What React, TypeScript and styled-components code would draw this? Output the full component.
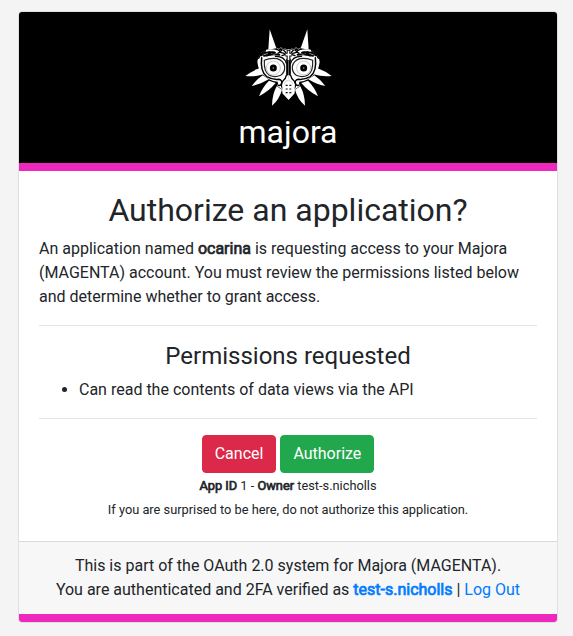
import React from "react";
import styled, { createGlobalStyle } from "styled-components";

const accent = "#ee27bd";

const GlobalStyle = createGlobalStyle`
  *, *::before, *::after { box-sizing: border-box; }
  body {
    margin: 0;
    background: #f4f4f4;
    color: #212529;
    font: 400 16px/24px Roboto, sans-serif;
  }
`;

const Page = styled.main`
  padding: 11px 15px 13px 18px;
`;

const Card = styled.section`
  width: 540px;
  border: 1px solid #dfdfdf;
  border-radius: 4px;
  background: #fff;
  overflow: hidden;
`;

const Header = styled.header`
  display: flex;
  flex-direction: column;
  align-items: center;
  height: 159px;
  padding: 12px 20px 11px;
  background: #000;
  color: #fff;
  border-bottom: 8px solid ${accent};
`;

const Logo = styled.svg`
  display: block;
  width: 100px;
  height: 89px;
  flex: none;
`;

const Title = styled.h2`
  margin: 0;
  font-size: 32px;
  font-weight: 400;
  line-height: 38.4px;
  text-align: center;
`;

const Body = styled.div`
  height: 370px;
  padding: 20px;
`;

const Intro = styled.p`
  margin: 8px 0 16px;
`;

const Divider = styled.hr`
  margin: 0 0 16px;
  border: 0;
  border-top: 1px solid rgba(0, 0, 0, 0.1);
`;

const Subtitle = styled.h4`
  margin: 0 0 7px;
  font-size: 24px;
  font-weight: 400;
  line-height: 28.8px;
  text-align: center;
`;

const Permissions = styled.ul`
  margin: 0 0 16px;
  padding-left: 40px;
`;

const Strong = styled.span`
  -webkit-text-stroke: 0.7px currentColor;
`;

const Actions = styled.div`
  display: flex;
  justify-content: center;
  gap: 4px;
  margin-bottom: 1px;
`;

const Button = styled.button<{ $color: string }>`
  height: 38px;
  padding: 6px 12px;
  border: 1px solid ${(p) => p.$color};
  border-radius: 4px;
  background: ${(p) => p.$color};
  color: #fff;
  font: inherit;
`;

const Note = styled.div`
  font-size: 12.8px;
  line-height: 24px;
  text-align: center;
`;

const Footer = styled.footer`
  height: 81px;
  padding: 12px 20px;
  border-top: 1px solid #dadada;
  border-bottom: 8px solid ${accent};
  background: #f7f7f7;
  text-align: center;
`;

const Link = styled.a`
  color: #007bff;
  text-decoration: none;
`;

function MaskHalf() {
  return (
    <g>
      <g fill="#fff">
        <path d="M95 22 L91 83 L115 79 Z" />
        <path d="M22 162 Q42 147 64 139 L76 157 Q50 165 22 162Z" />
        <path d="M41 192 Q54 174 74 160 L92 172 Q68 187 41 192Z" />
        <path d="M63 223 Q72 197 93 176 L113 183 Q93 207 63 223Z" />
        <path d="M102 251 Q102 219 116 193 L132 203 Q124 232 102 251Z" />
        <path d="M152 82 L122 86 Q96 78 78 86 Q60 99 58 120 Q61 144 73 156 Q80 165 92 171 Q105 179 119 179 Q122 185 117 192 L132 202 L137 217 L152 233Z" />
      </g>
      <g fill="none" stroke="#000" strokeLinecap="round">
        <path d="M79 115 Q96 107 117 110 Q137 116 140 134 Q141 151 128 160 Q110 168 94 160 Q77 150 79 115Z" strokeWidth="3.5" stroke="#222" />
        <path d="M71 107 Q66 148 86 164 Q104 174 122 172 Q135 175 130 186 Q128 192 121 190" strokeWidth="4.5" />
        <path d="M134 200 Q127 188 134 178 Q143 171 145 160" strokeWidth="4" />
        <path d="M112 103 Q139 102 145 124" strokeWidth="3.5" />
        <path d="M148 113 V157" strokeWidth="7" />
        <path d="M62 109 Q66 96 82 85 M70 101 L82 91 L87 101 L94 91 L102 99 L108 91" strokeWidth="4" />
        <path d="M76 95 Q93 88 111 92 M78 101 L100 98 M106 97 L124 98" strokeWidth="6" strokeDasharray="8 2" />
        <path d="M118 80 L127 89 L134 82 L143 91 M120 94 L129 87 M132 101 L143 97 M127 91 L139 94" strokeWidth="4" />
      </g>
      <circle cx="106" cy="138" r="21" fill="#fff" stroke="#999" strokeWidth="1.5" />
      <circle cx="106" cy="138" r="10.5" fill="#000" />
      <circle cx="106" cy="138" r="2.5" fill="#999" />
      <path d="M115 78 L123 82 L129 76 L134 83 L143 80" fill="none" stroke="#aaa" strokeWidth="2.5" />
      <path d="M76 98 L88 95 M99 102 L119 92" stroke="#aaa" strokeWidth="2" />
    </g>
  );
}

function MajoraLogo() {
  return (
    <Logo viewBox="0 6 300 267" aria-hidden="true">
      <MaskHalf />
      <g transform="translate(303 0) scale(-1 1)">
        <MaskHalf />
      </g>
      <path d="M151.5 84 V116 M142 98 H161" stroke="#000" strokeWidth="11" />
      <path d="M151.5 86 V115 M143 98 H160" stroke="#fff" strokeWidth="5" />
      <path
        d="M143 175 Q151.5 168 160 175 Q168 180 170 192 V214 L152 233 L133 214 V192 Q135 180 143 175Z"
        fill="#fff"
      />
      <path d="M139 186 Q141 176 151.5 175 Q162 176 164 186" fill="none" stroke="#bbb" strokeWidth="2" />
      <path
        d="M143 190 H149 M154 190 H160 M143 201 H149 M154 201 H160 M143 212 H149 M154 212 H160"
        stroke="#111"
        strokeWidth="3.5"
      />
    </Logo>
  );
}

export default function App() {
  return (
    <>
      <GlobalStyle />
      <Page>
        <Card>
          <Header>
            <MajoraLogo />
            <Title>majora</Title>
          </Header>
          <Body>
            <Title>Authorize an application?</Title>
            <Intro>
              An application named <Strong>ocarina</Strong> is requesting access to your Majora (MAGENTA) account. You
              must review the permissions listed below and determine whether to grant access.
            </Intro>
            <Divider />
            <Subtitle>Permissions requested</Subtitle>
            <Permissions>
              <li>Can read the contents of data views via the API</li>
            </Permissions>
            <Divider />
            <Actions>
              <Button $color="#dc2849">Cancel</Button>
              <Button $color="#22a84c">Authorize</Button>
            </Actions>
            <Note>
              <Strong>App ID</Strong> 1 - <Strong>Owner</Strong> test-s.nicholls
            </Note>
            <Note>If you are surprised to be here, do not authorize this application.</Note>
          </Body>
          <Footer>
            <div>This is part of the OAuth 2.0 system for Majora (MAGENTA).</div>
            <div>
              You are authenticated and 2FA verified as{" "}
              <Link>
                <Strong>test-s.nicholls</Strong>
              </Link>{" "}
              | <Link>Log Out</Link>
            </div>
          </Footer>
        </Card>
      </Page>
    </>
  );
}
